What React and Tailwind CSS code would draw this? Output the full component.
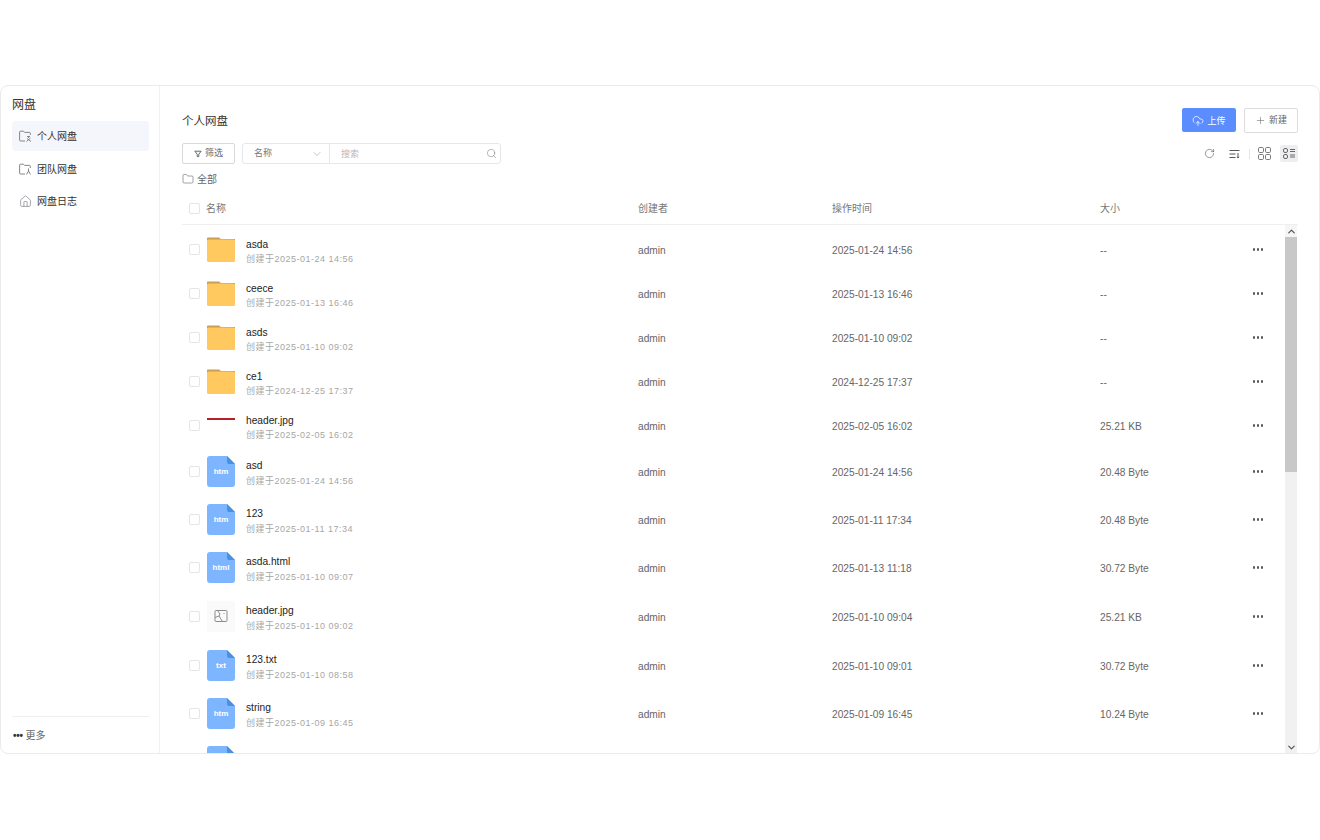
import { ChevronDown, ChevronUp, CloudUpload, Folder, Home, Plus, RotateCw, Search } from "lucide-react";

const files = [
  { name: "asda", type: "folder", created: "2025-01-24 14:56", time: "2025-01-24 14:56", size: "--" },
  { name: "ceece", type: "folder", created: "2025-01-13 16:46", time: "2025-01-13 16:46", size: "--" },
  { name: "asds", type: "folder", created: "2025-01-10 09:02", time: "2025-01-10 09:02", size: "--" },
  { name: "ce1", type: "folder", created: "2024-12-25 17:37", time: "2024-12-25 17:37", size: "--" },
  { name: "header.jpg", type: "banner", created: "2025-02-05 16:02", time: "2025-02-05 16:02", size: "25.21 KB" },
  { name: "asd", type: "file", ext: "htm", created: "2025-01-24 14:56", time: "2025-01-24 14:56", size: "20.48 Byte" },
  { name: "123", type: "file", ext: "htm", created: "2025-01-11 17:34", time: "2025-01-11 17:34", size: "20.48 Byte" },
  { name: "asda.html", type: "file", ext: "html", created: "2025-01-10 09:07", time: "2025-01-13 11:18", size: "30.72 Byte" },
  { name: "header.jpg", type: "image", created: "2025-01-10 09:02", time: "2025-01-10 09:04", size: "25.21 KB" },
  { name: "123.txt", type: "file", ext: "txt", created: "2025-01-10 08:58", time: "2025-01-10 09:01", size: "30.72 Byte" },
  { name: "string", type: "file", ext: "htm", created: "2025-01-09 16:45", time: "2025-01-09 16:45", size: "10.24 Byte" },
  // 只露出图标顶部的一行
  { name: "", type: "file", ext: "", created: "", time: "", size: "" },
];

const rowHeight = { folder: "h-11", banner: "h-11", file: "h-12", image: "h-[50px]" };

function FolderIcon() {
  return (
    <svg width="28" height="25" viewBox="0 0 28 25" className="block">
      <path d="M0 1.2Q0 .5.8.5H12L14 2H28V4H0Z" fill="#c9a052" />
      <rect x="0" y="2.4" width="28" height="22.6" rx="1.5" fill="#ffc95f" />
    </svg>
  );
}

function FileIcon({ ext }) {
  return (
    <div className="relative h-[31px] w-7">
      <svg width="28" height="31" viewBox="0 0 28 31" className="block">
        <path d="M3 0H20L28 8V28Q28 31 25 31H3Q0 31 0 28V3Q0 0 3 0Z" fill="#7db6ff" />
        <path d="M20 0L28 8H22Q20 8 20 6Z" fill="#4a90e2" />
      </svg>
      {ext && <span className="absolute inset-x-0 top-[10px] text-center text-[8px] leading-[12px] font-bold text-white">{ext}</span>}
    </div>
  );
}

function ImageThumb() {
  return (
    <div className="flex h-[31px] w-7 items-center justify-center bg-[#fafafa]">
      <svg width="14" height="14" viewBox="0 0 14 14" fill="none" stroke="#8c8c8c" strokeWidth="1">
        <rect x="1" y="1.5" width="12" height="11" rx="1" />
        <path d="M1 8.5L5 7L8.5 12.5M3.5 1.5L6 5L5 7" />
        <circle cx="10" cy="4.5" r="0.6" fill="#8c8c8c" stroke="none" />
      </svg>
    </div>
  );
}

function RowIcon({ file }) {
  if (file.type === "folder") return <FolderIcon />;
  if (file.type === "file") return <FileIcon ext={file.ext} />;
  if (file.type === "image") return <ImageThumb />;
  return (
    <div className="flex h-7 w-7 items-start">
      <div className="mt-[7px] h-[2px] w-7 bg-[#b3202a]" />
    </div>
  );
}

function Checkbox() {
  return <span className="ml-[7px] block h-[11px] w-[11px] rounded-[2px] border border-[#e3e5ea] bg-white" />;
}

function FolderUserIcon({ letter }) {
  return (
    <svg width="13" height="13" viewBox="0 0 13 13" fill="none" stroke="#77797e" strokeWidth="0.9">
      <path d="M6 11H1.5Q.6 11 .6 10V2Q.6 1.2 1.5 1.2H4.5L5.6 2.4H10.5Q11.3 2.4 11.3 3.2V5" />
      {letter === "a" ? <path d="M8 6.5L11 6.5M9.5 6.5V8M7.5 11.5L11.5 8M8 8.5L12 11.5" /> : <path d="M9.5 5.5V8M7.5 11.5L9.5 8L11.5 11.5" />}
    </svg>
  );
}

function NavItem({ icon, label, active, extra }) {
  return (
    <div className={`flex h-[30px] items-center rounded-[4px] px-[7px] ${extra} ${active ? "bg-[#f5f6fb]" : ""}`}>
      <span className="flex w-[18px] justify-start">{icon}</span>
      <span className="text-[10px] text-[#333333]">{label}</span>
    </div>
  );
}

function Dots() {
  return (
    <span className="mt-[1px] flex justify-center gap-[1.5px]">
      <span className="h-[2.5px] w-[2.5px] rounded-full bg-[#55575c]" />
      <span className="h-[2.5px] w-[2.5px] rounded-full bg-[#55575c]" />
      <span className="h-[2.5px] w-[2.5px] rounded-full bg-[#55575c]" />
    </span>
  );
}

export default function App() {
  return (
    <div className="flex h-[840px] w-[1320px] flex-col pt-[85px] pb-[86px] font-['Liberation_Sans','Noto_Sans_CJK_SC',sans-serif]">
      <div className="flex min-h-0 flex-1 rounded-[8px] border border-[#ebebeb] bg-white">
        {/* 侧边栏 */}
        <aside className="flex w-[159px] shrink-0 flex-col border-r border-[#f1f1f3] pr-[10px] pl-[11px]">
          <div className="mt-[11px] mb-[-1px] text-[12px] leading-[16px] text-[#333333]">网盘</div>
          <NavItem extra="mt-[9px]" active icon={<FolderUserIcon letter="a" />} label="个人网盘" />
          <NavItem extra="mt-[3px]" icon={<FolderUserIcon letter="b" />} label="团队网盘" />
          <NavItem extra="mt-[2px]" icon={<Home size={13} strokeWidth={1.2} color="#77797e" />} label="网盘日志" />
          <div className="mt-auto flex h-[37px] items-center gap-[3px] border-t border-[#efefef] pt-[1px] pl-px text-[10px] text-[#666666]">
            <span className="text-[10px] leading-none font-bold tracking-[-0.3px] text-[#33353a]">•••</span>
            <span>更多</span>
          </div>
        </aside>

        {/* 主体 */}
        <main className="flex min-w-0 flex-1 flex-col pr-[21px] pl-[22px]">
          <div className="mt-[22px] flex h-[25px] items-center justify-between">
            <h1 className="pt-[2px] text-[11.5px] font-normal text-[#333333]">个人网盘</h1>
            <div className="flex gap-2">
              <button className="flex h-[24px] w-[54px] items-center justify-center gap-[3px] rounded-[2px] bg-[#5b8dff] pt-[1px] text-[9px] text-white">
                <CloudUpload size={12} strokeWidth={1.5} />
                <span className="pt-[2px]">上传</span>
              </button>
              <button className="flex h-[25px] w-[54px] items-center justify-center gap-[3px] rounded-[2px] border border-[#dcdcdc] text-[9px] text-[#666666]">
                <Plus size={11} strokeWidth={1.2} />
                <span className="pt-[1px]">新建</span>
              </button>
            </div>
          </div>

          <div className="mt-[10px] flex h-[21px] items-center">
            <button className="flex h-[21px] w-[53px] items-center justify-center gap-[3px] rounded-[2px] border border-[#d9d9d9] text-[9px] text-[#666666]">
              <svg width="8" height="8" viewBox="0 0 8 8" fill="none" stroke="#66686d" strokeWidth="1">
                <path d="M.8 1.2H7.2L4.8 4.2V6.6H3.2V4.2Z" />
              </svg>
              <span className="pt-[1px]">筛选</span>
            </button>
            <div className="ml-[7px] flex h-[21px] w-[259px] rounded-[3px] border border-[#e6e7eb]">
              <div className="flex w-[87px] items-center justify-between border-r border-[#e6e7eb] pr-[6px] pl-[11px] text-[9px] text-[#777777]">
                名称
                <ChevronDown size={12} strokeWidth={1} color="#8a8c91" />
              </div>
              <div className="flex flex-1 items-center justify-between pr-[3px] pl-[11px] text-[9px] text-[#b5b7bb]">
                <span className="pt-[2px]">搜索</span>
                <Search size={11} strokeWidth={1} color="#66686d" />
              </div>
            </div>
            <div className="ml-auto flex items-center text-[#555555]">
              <RotateCw size={11} strokeWidth={1.3} />
              <svg width="11" height="10" viewBox="0 0 11 10" fill="none" stroke="#55575c" strokeWidth="1" className="ml-[14px]">
                <path d="M.5 1.5H10.5M.5 5H6.5M.5 8.5H6.5M9 4V9M8 7.8L9 9L10 7.8" />
              </svg>
              <span className="ml-[9px] h-[10px] w-px bg-[#e5e5e5]" />
              <svg width="13" height="13" viewBox="0 0 13 13" fill="none" stroke="#77797e" strokeWidth="1" className="ml-[8px]">
                <rect x=".5" y=".5" width="5" height="5" rx="1.2" />
                <rect x="7.5" y=".5" width="5" height="5" rx="1.2" />
                <rect x=".5" y="7.5" width="5" height="5" rx="1.2" />
                <rect x="7.5" y="7.5" width="5" height="5" rx="1.2" />
              </svg>
              <span className="ml-[9px] flex h-[17px] w-[18px] items-center justify-center rounded-[2px] bg-[#eeeeee]">
                <svg width="12" height="11" viewBox="0 0 12 11" fill="none" stroke="#66686d" strokeWidth="1">
                  <rect x=".5" y=".5" width="4" height="4" rx="1.5" />
                  <rect x=".5" y="6.5" width="4" height="4" rx="1.5" />
                  <path d="M7 1.5H12M7 3.5H12M7 7H12M7 9H12" />
                </svg>
              </span>
            </div>
          </div>

          <div className="mt-[8px] flex h-[14px] items-center gap-[3px] text-[10px] text-[#666666]">
            <Folder size={12} strokeWidth={1.1} color="#55575c" />
            全部
          </div>

          <div className="mt-[5px] grid h-[34px] shrink-0 grid-cols-[24px_432px_194px_268px_1fr] items-center border-b border-[#efefef] pt-[1px] text-[10px] text-[#777777]">
            <Checkbox />
            <span>名称</span>
            <span>创建者</span>
            <span>操作时间</span>
            <span>大小</span>
          </div>

          <div className="relative min-h-0 flex-1 overflow-hidden pt-[2px]">
            {files.map((file, i) => (
              <div key={i} className={`grid grid-cols-[24px_432px_194px_268px_148px_20px] items-center ${rowHeight[file.type]}`}>
                <Checkbox />
                <div className="flex items-center pl-px">
                  <span className="w-[39px] shrink-0"><RowIcon file={file} /></span>
                  <div className={`mt-[4px] flex flex-col ${file.type === "folder" || file.type === "banner" ? "gap-0" : "gap-[1px]"}`}>
                    <span className="pt-[1px] text-[10.2px] leading-[14px] text-[#222222]">{file.name}</span>
                    {file.created && (
                      <span className="text-[9px] leading-[14px] tracking-[0.5px] text-[#a6a6a6]">创建于{file.created}</span>
                    )}
                  </div>
                </div>
                <span className="mt-[4px] text-[10.2px] text-[#666666]">{file.created ? "admin" : ""}</span>
                <span className="mt-[4px] text-[10.2px] text-[#666666]">{file.time}</span>
                <span className="mt-[4px] text-[10.2px] text-[#666666]">{file.size}</span>
                {file.created && <Dots />}
              </div>
            ))}

            {/* 滚动条 */}
            <div className="absolute top-0 right-px bottom-0 flex w-3 flex-col bg-[#f1f1f1]">
              <span className="flex h-3 items-center justify-center bg-[#f5f5f5]">
                <ChevronUp size={11} strokeWidth={2.5} color="#505050" />
              </span>
              <span className="h-[235px] bg-[#c8c8c8]" />
              <span className="mt-auto flex h-3 items-center justify-center">
                <ChevronDown size={11} strokeWidth={2.5} color="#505050" />
              </span>
            </div>
          </div>
        </main>
      </div>
    </div>
  );
}
